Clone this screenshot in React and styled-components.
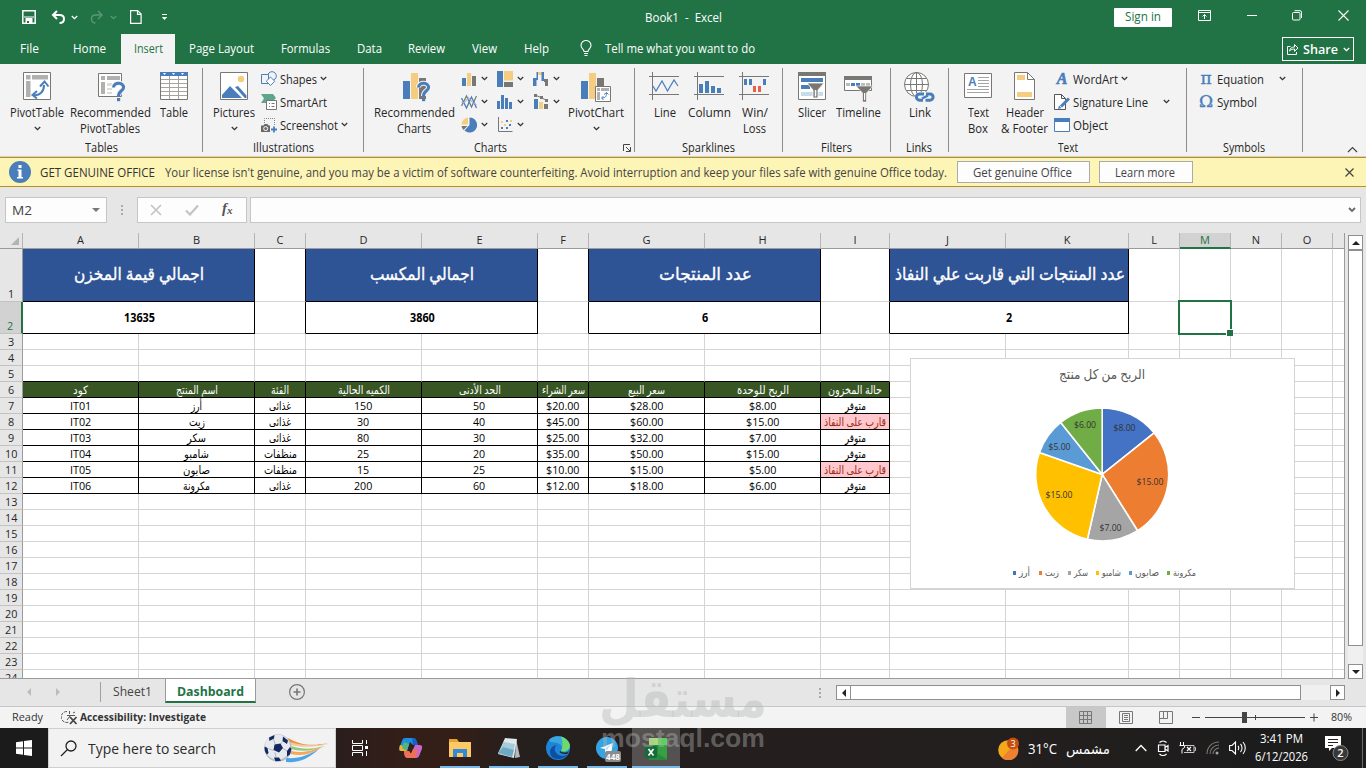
import React, { useLayoutEffect, useRef, useState } from "react";
import styled, { createGlobalStyle } from "styled-components";

const BLUE = "#4a7ebb";
const SAND = "#f5cd80";
const GREY = "#797774";

const GlobalStyle = createGlobalStyle`
  * {
    box-sizing: border-box;
  }
  body {
    margin: 0;
    overflow: hidden;
    font-family: "Open Sans", "Noto Sans", "DejaVu Sans", sans-serif;
    font-size: 12px;
    color: #262626;
  }
`;

// condenses a label horizontally to a fixed width
function Fit({ w, ar, children }) {
  const ref = useRef(null);
  const [fit, setFit] = useState({});
  useLayoutEffect(() => {
    const el = ref.current;
    el.style.transform = "none";
    const natural = el.getBoundingClientRect().width;
    setFit({ transform: `scaleX(${w / natural})` });
  }, [w, children]);
  return (
    <FitBox $w={w}>
      <FitText ref={ref} dir={ar ? "rtl" : "ltr"} style={fit}>
        {children}
      </FitText>
    </FitBox>
  );
}

function Svg({ w, h, children }) {
  return (
    <Drawing width={w} height={h} viewBox={`0 0 ${w} ${h}`} fill="none">
      {children}
    </Drawing>
  );
}

function Chevron({ color = "#333" }) {
  return (
    <Svg w={7} h={5}>
      <path d="M.8 1l2.7 2.6L6.2 1" stroke={color} strokeWidth="1.3" />
    </Svg>
  );
}

/* ---------- ribbon drawings ---------- */

const PivotIcon = () => (
  <Svg w={28} h={28}>
    <path d="M.5.5h27v27H.5z" fill="#fff" stroke="#797774" />
    <path d="M3 3h4.500v4.500H3zM9 3h16v4.500H9zM3 9h4.500v16H3z" fill="#b1b0af" />
    <path d="M10.500 23c6.500 1 10.500-3.500 10.500-10" stroke={BLUE} strokeWidth="2" />
    <path d="M17 14.500l4.500-5 4 5M14 19l-4.500 4 4.500 3.500" stroke={BLUE} strokeWidth="2" />
  </Svg>
);

const Question = ({ x, y }) => (
  <g transform={`translate(${x} ${y})`}>
    <path d="M1.500 5.500C1.500-.5 12.500 0 11.500 6 11 9 6.500 9 6.500 14" stroke="#f3f3f3" strokeWidth="5" />
    <path d="M1.500 5.500C1.500-.5 12.500 0 11.500 6 11 9 6.500 9 6.500 14" stroke={BLUE} strokeWidth="3" />
    <path d="M5 16h3.200v3.200H5z" fill={BLUE} />
  </g>
);

const RecPivotIcon = () => (
  <Svg w={32} h={30}>
    <g transform="translate(4 0)">
      <path d="M.5 1.500h23v23H.5z" fill="#fff" stroke="#797774" />
      <path d="M3 4h4v4H3zM9 4h13v4H9zM3 10h4v12H3z" fill="#b1b0af" />
      <path d="M9 11h5v3H9zM9 16h5v2H9zM9 20h5v2H9z" fill="#ddd" />
      <Question x={14} y={10} />
    </g>
  </Svg>
);

const TableIcon = () => (
  <Svg w={28} h={28}>
    <path d="M.5.5h27v27H.5z" fill="#fff" stroke="#797774" />
    <path d="M0 0h28v4H0z" fill={BLUE} />
    <path d="M3 1h3L4.500 3zM12 1h3l-1.500 2zM21 1h3l-1.500 2z" fill="#fff" />
    <path d="M9.500 4v23M18.500 4v23M1 7.500h26M1 11.500h26M1 15.500h26M1 19.500h26M1 23.500h26" stroke="#a5a4a2" />
  </Svg>
);

const PicturesIcon = () => (
  <Svg w={28} h={28}>
    <path d="M.5.5h27v27H.5z" fill="#fff" stroke="#797774" />
    <circle cx="21" cy="7" r="3.200" fill={SAND} />
    <path d="M2 26v-3l8-9 12 12zM15 15l3-1 8.500 9.500V26h-1.800z" fill={BLUE} />
  </Svg>
);

const ShapesIcon = () => (
  <Svg w={16} h={16}>
    <circle cx="11" cy="5" r="4.300" stroke={BLUE} fill="#f3f3f3" />
    <path d="M.5 3.500h7v9h-7z" stroke={BLUE} fill="#f3f3f3" />
    <path d="M9.500 6l4.200 4.200-4.200 4.300-4.200-4.300z" stroke={BLUE} fill="#fff" />
  </Svg>
);

const SmartArtIcon = () => (
  <Svg w={16} h={16}>
    <path d="M0 0h12l3 4-3 3H5v2H0l3-4.500z" fill="#5fa58b" />
    <path d="M5.500 6.500h10v9h-10z" fill="#fff" stroke="#797774" />
    <path d="M8 9.500h1M10.500 9.500h3M8 12.500h1M10.500 12.500h3" stroke="#797774" />
  </Svg>
);

const ScreenshotIcon = () => (
  <Svg w={16} h={16}>
    <path d="M3.500 6V1.500h10V9" stroke="#888" strokeDasharray="1 1" />
    <path d="M0 8.500h2.500l1-1.500h3l1 1.500H9V15H0z" fill="#6b6967" />
    <circle cx="4.700" cy="11.600" r="2" stroke="#fff" />
    <path d="M13 9.500v6M10 12.500h6" stroke={BLUE} strokeWidth="1.800" />
  </Svg>
);

const RecChartsIcon = () => (
  <Svg w={33} h={30}>
    <g transform="translate(5 0)">
      <path d="M0 9h7v18H0z" fill={BLUE} />
      <path d="M8 1h7v26H8z" fill={SAND} />
      <path d="M16 6h7v21h-7z" fill={GREY} />
      <Question x={14} y={10} />
    </g>
  </Svg>
);

const PivotChartIcon = () => (
  <Svg w={30} h={30}>
    <path d="M0 9h7v18H0z" fill={BLUE} />
    <path d="M8 1h7v26H8z" fill={SAND} />
    <path d="M16 6h7v8h-7z" fill={GREY} />
    <path d="M14.500 14.500h15v15h-15z" fill="#fff" stroke="#797774" />
    <path d="M16 16h3v3h-3zM20 16h8v3h-8zM16 20h3v8h-3z" fill="#b1b0af" />
    <path d="M21 26c3 0 4.500-1 4.500-5M23 22.500l2.500-2 2 2M22.500 24l-2 2 2 2" stroke={BLUE} />
  </Svg>
);

const chartIcons = [
  // column
  <Svg w={16} h={16}>
    <path d="M1 7h4v8H1z" fill={BLUE} />
    <path d="M6 2h4v13H6z" fill={SAND} />
    <path d="M11 5h4v10h-4z" fill={GREY} />
  </Svg>,
  // hierarchy
  <Svg w={16} h={16}>
    <path d="M0 0h6v16H0z" fill={BLUE} />
    <path d="M7 0h9v9.500H7z" fill={SAND} />
    <path d="M7 11h9v5H7z" fill={GREY} />
  </Svg>,
  // waterfall
  <Svg w={16} h={16}>
    <path d="M0 7h3.500v8H0zM3.500 1H5v8H3.500z" fill={BLUE} />
    <path d="M5 1h4v3H5z" fill={SAND} />
    <path d="M8.500 1H11v9H8.500z" fill={BLUE} />
    <path d="M11 8h4v7h-3v-4h-1z" fill={GREY} />
  </Svg>,
  // line
  <Svg w={16} h={16}>
    <path d="M.5 12L5.500 2l5 11 5-11" stroke="#797774" strokeWidth="1.200" />
    <path d="M.5 4l5 10 5-11 5 11" stroke={BLUE} strokeWidth="1.300" />
    <path d="M.5 8.500h3l4-5 4 5 4 2" stroke="#8cb0d8" />
  </Svg>,
  // histogram
  <Svg w={16} h={16}>
    <path d="M0 7h3v8H0zM4 1h3v14H4zM8 4h3v11H8zM12 8h3v7h-3z" fill={BLUE} />
  </Svg>,
  // combo
  <Svg w={16} h={16}>
    <path d="M1 5h4v10H1z" fill={BLUE} />
    <path d="M6 8h4v7H6z" fill={SAND} />
    <path d="M11 10h4v5h-4z" fill={GREY} />
    <path d="M2 1l6 2.500 6 3" stroke="#797774" />
    <path d="M1 0h3v3H1zM7 2h3v3H7zM12 5h3v3h-3z" fill={GREY} />
  </Svg>,
  // pie
  <Svg w={16} h={16}>
    <path d="M8.500 8V.5a7.500 7.500 0 1 1-5 13z" fill={BLUE} />
    <path d="M7 7.500V.5A7 7 0 0 0 .5 7.500z" fill={SAND} />
    <path d="M.5 9H6.500L2.500 13A7 7 0 0 1 .5 9z" fill={GREY} />
  </Svg>,
  // scatter
  <Svg w={16} h={16}>
    <path d="M1.500 0v14.500h14" stroke="#797774" />
    <path d="M4 10h2v2H4zM9 3h2v2H9zM12 7h2v2h-2zM9 10h2v2H9z" fill={BLUE} />
    <path d="M4 4h2v2H4zM7 7h2v2H7zM13 3h2v2h-2z" fill={SAND} />
  </Svg>,
];

const sparkFrame = <path d="M3.500 0v28M0 4.500h30M0 22.500h30" stroke="#797774" />;

const LineSparkIcon = () => (
  <Svg w={31} h={28}>
    {sparkFrame}
    <path d="M4 14l3 5 6-10 5.500 10 6.500-11 4 6" stroke={BLUE} strokeWidth="1.200" />
  </Svg>
);

const ColumnSparkIcon = () => (
  <Svg w={31} h={28}>
    {sparkFrame}
    <path d="M5 12h4v9H5zM11 9h4v12h-4zM17 14h4v7h-4zM23 16h4v5h-4z" fill={BLUE} />
  </Svg>
);

const WinLossIcon = () => (
  <Svg w={31} h={28}>
    {sparkFrame}
    <path d="M5 7h3v6H5zM10 7h3v6h-3zM24 7h3v6h-3z" fill={BLUE} />
    <path d="M14 14h3v6h-3zM19 14h3v6h-3z" fill="#e8604c" />
  </Svg>
);

const SlicerIcon = () => (
  <Svg w={28} h={28}>
    <path d="M.5.5h27v27H.5z" fill="#fff" stroke="#797774" />
    <path d="M0 0h28v4H0z" fill={GREY} />
    <path d="M3 6h22v4H3zM3 13h9v4H3z" fill={BLUE} />
    <path d="M3 20h22v4H3z" fill="#c5dcea" />
    <path d="M9 11h17l-6 7v8h-5v-8z" fill={GREY} stroke="#fff" strokeWidth=".8" />
    <path d="M16.800 18h1.500v6.500h-1.500z" fill="#fff" />
  </Svg>
);

const TimelineIcon = () => (
  <Svg w={29} h={30}>
    <path d="M.5 4.500h27v14H.5z" fill="#fff" stroke="#797774" />
    <path d="M0 4h28v4H0z" fill={GREY} />
    <path d="M2 11h4v3H2zM17 11h4v3h-4zM22 11h4v3h-4z" fill="#bbb" />
    <path d="M7 11h4v3H7zM12 11h4v3h-4z" fill={BLUE} />
    <path d="M12 14h17l-6.500 7v9h-4v-9z" fill={GREY} stroke="#f3f3f3" strokeWidth=".7" />
    <path d="M20 21h1.200v7H20z" fill="#fff" />
  </Svg>
);

const LinkIcon = () => (
  <Svg w={31} h={30}>
    <circle cx="12.500" cy="12.500" r="12" stroke="#797774" fill="#fff" />
    <ellipse cx="12.500" cy="12.500" rx="6" ry="12" stroke="#797774" />
    <path d="M12.500 0v25M.5 12.500h24M2.500 6.500h20M2.500 18.500h20" stroke="#797774" />
    <path d="M15.500 25h11" stroke="#f3f3f3" strokeWidth="10" strokeLinecap="round" />
    <path d="M20 22h-4.500a3 3 0 0 0 0 6.200H19M22 22h4a3 3 0 0 1 0 6.200h-4.500" stroke={BLUE} strokeWidth="3" />
    <path d="M18 26.500l6-3" stroke={BLUE} strokeWidth="2.400" />
  </Svg>
);

const TextBoxIcon = () => (
  <Svg w={28} h={28}>
    <path d="M.5 1.500h27v24H.5z" fill="#fff" stroke="#797774" />
    <text x="4" y="14" fontSize="12" fontWeight="700" fontFamily="Liberation Sans" fill={BLUE}>A</text>
    <path d="M14 5.500h11M14 8.500h11M14 11.500h11M14 14.500h11M3 17.500h22M3 20.500h22" stroke="#a5a4a2" />
  </Svg>
);

const HeaderFooterIcon = () => (
  <Svg w={21} h={28}>
    <path d="M.5.5h13l7 7v20H.5z" fill="#fff" stroke="#797774" />
    <path d="M13.500.5v7h7" stroke="#797774" />
    <path d="M3 3h8v5H3zM3 20h15v5H3z" fill={SAND} />
  </Svg>
);

const SignatureIcon = () => (
  <Svg w={16} h={16}>
    <path d="M.5.5h7l4 4v11H.5z" fill="#fff" stroke="#555" />
    <path d="M7.500.5v4h4" stroke="#555" />
    <path d="M15 4.500L7 12.500" stroke={BLUE} strokeWidth="3" />
    <path d="M4 15l1-3.500L7.500 14z" fill={BLUE} />
  </Svg>
);

const ObjectIcon = () => (
  <Svg w={16} h={14}>
    <path d="M.5.5h15v13H.5z" fill="#fff" stroke={BLUE} />
    <path d="M0 0h16v4H0z" fill={BLUE} />
  </Svg>
);

function Big({ icon, lines, w, arrow }) {
  return (
    <BigButton $w={w}>
      <BigArt>{icon}</BigArt>
      {lines.map(([text, tw]) => (
        <BigLine key={text}>
          <Fit w={tw}>{text}</Fit>
        </BigLine>
      ))}
      {arrow && (
        <BigArrow>
          <Chevron />
        </BigArrow>
      )}
    </BigButton>
  );
}

function Small({ icon, text, tw, arrow, gap = 3 }) {
  return (
    <SmallButton>
      <SmallArt>{icon}</SmallArt>
      <Fit w={tw}>{text}</Fit>
      {arrow && (
        <SmallArrow $gap={gap}>
          <Chevron />
        </SmallArrow>
      )}
    </SmallButton>
  );
}

function Ribbon() {
  return (
    <RibbonBar>
      <Group $w={203}>
        <Tools $pad={5}>
          <Big w={64} icon={<PivotIcon />} lines={[["PivotTable", 54]]} arrow />
          <Big w={82} icon={<RecPivotIcon />} lines={[["Recommended", 81], ["PivotTables", 60]]} />
          <Big w={46} icon={<TableIcon />} lines={[["Table", 28]]} />
        </Tools>
        <GroupName><Fit w={33}>Tables</Fit></GroupName>
      </Group>
      <Group $w={161}>
        <Tools $pad={9}>
          <Big w={44} icon={<PicturesIcon />} lines={[["Pictures", 42]]} arrow />
          <SmallColumn $ml={5}>
            <Small icon={<ShapesIcon />} text="Shapes" tw={37} arrow />
            <Small icon={<SmartArtIcon />} text="SmartArt" tw={47} />
            <Small icon={<ScreenshotIcon />} text="Screenshot" tw={58} arrow />
          </SmallColumn>
        </Tools>
        <GroupName><Fit w={61}>Illustrations</Fit></GroupName>
      </Group>
      <Group $w={271}>
        <Tools $pad={9}>
          <Big w={82} icon={<RecChartsIcon />} lines={[["Recommended", 81], ["Charts", 34]]} />
          <ChartGrid>
            {chartIcons.map((icon, i) => (
              <ChartButton key={i}>
                {icon}
                <Chevron />
              </ChartButton>
            ))}
          </ChartGrid>
          <Big w={54} icon={<PivotChartIcon />} lines={[["PivotChart", 56]]} arrow />
        </Tools>
        <GroupName $right={17}><Fit w={33}>Charts</Fit></GroupName>
        <Launcher>
          <Svg w={8} h={8}>
            <path d="M.5 7V.5H7M3 3l4 4M7.500 3v4.500H3" stroke="#444" />
          </Svg>
        </Launcher>
      </Group>
      <Group $w={148}>
        <Tools $pad={7}>
          <Big w={45} icon={<LineSparkIcon />} lines={[["Line", 22]]} />
          <Big w={45} icon={<ColumnSparkIcon />} lines={[["Column", 43]]} />
          <Big w={45} icon={<WinLossIcon />} lines={[["Win/", 26], ["Loss", 23]]} />
        </Tools>
        <GroupName><Fit w={53}>Sparklines</Fit></GroupName>
      </Group>
      <Group $w={108}>
        <Tools $pad={7}>
          <Big w={43} icon={<SlicerIcon />} lines={[["Slicer", 28]]} />
          <Big w={50} icon={<TimelineIcon />} lines={[["Timeline", 45]]} />
        </Tools>
        <GroupName><Fit w={31}>Filters</Fit></GroupName>
      </Group>
      <Group $w={58}>
        <Tools $pad={6}>
          <Big w={45} icon={<LinkIcon />} lines={[["Link", 22]]} />
        </Tools>
        <GroupName $right={1}><Fit w={26}>Links</Fit></GroupName>
      </Group>
      <Group $w={238}>
        <Tools $pad={11}>
          <Big w={36} icon={<TextBoxIcon />} lines={[["Text", 21], ["Box", 20]]} />
          <Big w={57} icon={<HeaderFooterIcon />} lines={[["Header", 38], ["& Footer", 47]]} />
          <SmallColumn $ml={1}>
            <Small icon={<GlyphA>A</GlyphA>} text="WordArt" tw={45} arrow />
            <Small icon={<SignatureIcon />} text="Signature Line" tw={75} arrow gap={15} />
            <Small icon={<ObjectIcon />} text="Object" tw={35} />
          </SmallColumn>
        </Tools>
        <GroupName><Fit w={20}>Text</Fit></GroupName>
      </Group>
      <Group $w={116}>
        <Tools $pad={11}>
          <SmallColumn $ml={0}>
            <Small icon={<Greek>π</Greek>} text="Equation" tw={47} arrow gap={15} />
            <Small icon={<Greek>Ω</Greek>} text="Symbol" tw={40} />
          </SmallColumn>
        </Tools>
        <GroupName $right={1}><Fit w={42}>Symbols</Fit></GroupName>
      </Group>
      <Collapse>
        <Svg w={11} h={7}>
          <path d="M1 6l4.500-4.500L10 6" stroke="#444" strokeWidth="1.200" />
        </Svg>
      </Collapse>
    </RibbonBar>
  );
}

/* ---------- title and tabs ---------- */

const TABS = [
  ["File", 59, 19],
  ["Home", 61, 33],
  ["Insert", 54, 29],
  ["Page Layout", 93, 65],
  ["Formulas", 75, 49],
  ["Data", 52, 25],
  ["Review", 63, 37],
  ["View", 53, 25],
  ["Help", 51, 25],
];

function TitleBar() {
  return (
    <Title>
      <QuickAccess>
        <Svg w={14} h={14}>
          <path d="M.8.800h12.400v12.400H.8z" stroke="#fff" strokeWidth="1.500" />
          <path d="M2 7h10M3.500 8.500h7" stroke="#fff" />
          <path d="M3.500 9h7v5h-7z" fill="#fff" />
          <path d="M5 11h2v2H5z" fill="#217346" />
        </Svg>
        <Svg w={14} h={14}>
          <path d="M2 5h6.500c3 0 4.500 1.500 4.500 4s-2 4-4.500 4M6 1L2 5l4 4" stroke="#fff" strokeWidth="2" />
        </Svg>
        <Chevron color="#fff" />
        <Svg w={14} h={14}>
          <path d="M12 5H5.500C3 5 1.500 6.500 1.500 9s2 4 4 4M8 1l4 4-4 4" stroke="#5a967a" strokeWidth="1.500" />
        </Svg>
        <Chevron color="#5a967a" />
        <Svg w={12} h={14}>
          <path d="M.6.600h7l3.500 3.500v9.300H.6zM7.500.600v3.800h3.500" stroke="#fff" strokeWidth="1.200" />
        </Svg>
        <Svg w={7} h={7}>
          <path d="M1 .5h5" stroke="#fff" />
          <path d="M.8 3h5.400L3.500 6z" fill="#fff" />
        </Svg>
      </QuickAccess>
      <BookName><Fit w={77}>Book1  -  Excel</Fit></BookName>
      <SignIn><Fit w={36}>Sign in</Fit></SignIn>
      <WindowButtons>
        <Svg w={13} h={11}>
          <path d="M.5.500h12v10H.5zM.5 2.500h12M6.500 9V4.500M4.500 6.500l2-2 2 2" stroke="#fff" />
        </Svg>
        <Svg w={10} h={11}>
          <path d="M0 5.500h10" stroke="#fff" />
        </Svg>
        <Svg w={10} h={11}>
          <rect x=".5" y="2.500" width="7.500" height="7.500" rx="1" stroke="#fff" />
          <path d="M2.500.700H8a1.500 1.500 0 0 1 1.500 1.500V8" stroke="#fff" />
        </Svg>
        <Svg w={11} h={11}>
          <path d="M.5.500l10 10M10.500.500l-10 10" stroke="#fff" strokeWidth="1.100" />
        </Svg>
      </WindowButtons>
    </Title>
  );
}

function TabBar() {
  return (
    <Tabs>
      {TABS.map(([name, w, tw]) => (
        <Tab key={name} $w={w} $active={name === "Insert"}>
          <Fit w={tw}>{name}</Fit>
        </Tab>
      ))}
      <TellMe>
        <Svg w={12} h={16}>
          <path d="M4 11.500C4 9 1 8.500 1 5.500a5 5 0 0 1 10 0c0 3-3 3.500-3 6zM4 13.500h4M4.500 15.500h3" stroke="#fff" strokeWidth="1.100" />
        </Svg>
        <Fit w={150}>Tell me what you want to do</Fit>
      </TellMe>
      <Share>
        <Svg w={12} h={12}>
          <path d="M3.500 3.500H.5v8h9V9M2.500 8c.5-3 2.500-4 5-4V1.500L11 5 7.500 8.300V6C5.500 6 4 6.500 2.500 8z" stroke="#fff" />
        </Svg>
        <Fit w={35}>Share</Fit>
        <Chevron color="#fff" />
      </Share>
    </Tabs>
  );
}

function LicenseBar() {
  return (
    <License>
      <Svg w={22} h={22}>
        <circle cx="11" cy="11" r="11" fill={BLUE} />
        <path d="M9.500 4h3v3h-3zM8.500 8.500h4V16h1.500v1.500H8V16h1.500v-6h-1z" fill="#fff" />
      </Svg>
      <LicenseTitle><Fit w={115}>GET GENUINE OFFICE</Fit></LicenseTitle>
      <Fit w={782}>
        Your license isn't genuine, and you may be a victim of software counterfeiting. Avoid interruption and keep your files safe with genuine Office today.
      </Fit>
      <LicenseButton $w={133} $ml={10}><Fit w={99}>Get genuine Office</Fit></LicenseButton>
      <LicenseButton $w={94} $ml={9}><Fit w={60}>Learn more</Fit></LicenseButton>
      <LicenseClose>
        <Svg w={9} h={9}>
          <path d="M.5.500l8 8M8.500.500l-8 8" stroke="#444" strokeWidth="1.200" />
        </Svg>
      </LicenseClose>
    </License>
  );
}

function FormulaBar() {
  return (
    <FormulaRow>
      <NameBox>
        <Fit w={20}>M2</Fit>
        <Svg w={8} h={4}>
          <path d="M0 0h8L4 4z" fill="#777" />
        </Svg>
      </NameBox>
      <Dots>
        <Svg w={2} h={10}>
          <path d="M0 0h2v2H0zM0 4h2v2H0zM0 8h2v2H0z" fill="#a9a9a9" />
        </Svg>
      </Dots>
      <FxBox>
        <Svg w={12} h={12}>
          <path d="M1 1l10 10M11 1L1 11" stroke="#c4c4c4" strokeWidth="1.700" />
        </Svg>
        <Svg w={14} h={12}>
          <path d="M1 6.500l4 4L13 1.500" stroke="#c4c4c4" strokeWidth="2.200" />
        </Svg>
        <Fx>f<sub>x</sub></Fx>
      </FxBox>
      <FormulaInput>
        <Svg w={8} h={6}>
          <path d="M1 1l3 3 3-3" stroke="#666" strokeWidth="1.800" />
        </Svg>
      </FormulaInput>
    </FormulaRow>
  );
}

/* ---------- sheet ---------- */

const COLS = "ABCDEFGHIJKLMNO".split("");
const KPIS = [
  { col: 2, title: "اجمالي قيمة المخزن", w: 130, value: "13635" },
  { col: 5, title: "اجمالي المكسب", w: 104, value: "3860" },
  { col: 8, title: "عدد المنتجات", w: 93, value: "6" },
  { col: 11, title: "عدد المنتجات التي قاربت علي النفاذ", w: 230, value: "2" },
];
const HEADS = [
  ["كود", 15],
  ["اسم المنتج", 42],
  ["الفئة", 18],
  ["الكميه الحالية", 52],
  ["الحد الأدنى", 42],
  ["سعر الشراء", 43],
  ["سعر البيع", 37],
  ["الربح للوحدة", 52],
  ["حالة المخزون", 54],
];
const FOOD = ["غذائى", 22];
const CLEAN = ["منظفات", 33];
const OK = ["متوفر", 21];
const LOW = ["قارب على النفاذ", 62];
const ITEMS = [
  ["IT01", ["أرز", 11], FOOD, "150", "50", "$20.00", "$28.00", "$8.00", OK],
  ["IT02", ["زيت", 16], FOOD, "30", "40", "$45.00", "$60.00", "$15.00", LOW],
  ["IT03", ["سكر", 19], FOOD, "80", "30", "$25.00", "$32.00", "$7.00", OK],
  ["IT04", ["شامبو", 25], CLEAN, "25", "20", "$35.00", "$50.00", "$15.00", OK],
  ["IT05", ["صابون", 27], CLEAN, "15", "25", "$10.00", "$15.00", "$5.00", LOW],
  ["IT06", ["مكرونة", 27], FOOD, "200", "60", "$12.00", "$18.00", "$6.00", OK],
];

const latinWidth = (s) =>
  [...s].reduce((sum, ch) => sum + (ch === "." || ch === "I" ? 3 : 6.1), 0);

function renderCell(row, col) {
  const key = `${row}-${col}`;
  const kpi = row < 3 && KPIS.find((k) => k.col === col);
  if (kpi) {
    return row === 1 ? (
      <KpiTitle key={key} $col={col}>
        <Fit w={kpi.w} ar>{kpi.title}</Fit>
      </KpiTitle>
    ) : (
      <KpiValue key={key} $col={col}>
        <Fit w={kpi.value.length * 6.2}>{kpi.value}</Fit>
      </KpiValue>
    );
  }
  if (row < 3 && KPIS.some((k) => k.col + 1 === col)) return null;
  if (row === 6 && col < 11) {
    const [text, w] = HEADS[col - 2];
    return (
      <HeadCell key={key} $row={row} $col={col}>
        <Fit w={w} ar>{text}</Fit>
      </HeadCell>
    );
  }
  if (row > 6 && row < 13 && col < 11) {
    const value = ITEMS[row - 7][col - 2];
    const arabic = Array.isArray(value);
    return (
      <ItemCell key={key} $row={row} $col={col} $low={value === LOW}>
        {arabic ? <Fit w={value[1]} ar>{value[0]}</Fit> : <Fit w={latinWidth(value)}>{value}</Fit>}
      </ItemCell>
    );
  }
  return (
    <Cell
      key={key}
      $row={row}
      $col={col}
      $darkRight={row < 3 && [4, 7, 10].includes(col)}
      $darkBottom={row === 5 && col < 11}
    />
  );
}

function Sheet() {
  const rows = Array.from({ length: 24 }, (_, i) => i + 1);
  return (
    <SheetGrid>
      <Corner>
        <Svg w={8} h={8}>
          <path d="M8 0v8H0z" fill="#b4b4b4" />
        </Svg>
      </Corner>
      {COLS.map((c) => (
        <ColHead key={c} $active={c === "M"}>{c}</ColHead>
      ))}
      <ColHead $last />
      {rows.map((row) => (
        <React.Fragment key={row}>
          <RowHead $row={row} $active={row === 2}>
            <Fit w={row > 9 ? 12.4 : 6.2}>{String(row)}</Fit>
          </RowHead>
          {Array.from({ length: 16 }, (_, i) => renderCell(row, i + 2))}
        </React.Fragment>
      ))}
      <Selection />
      <ProfitChart />
    </SheetGrid>
  );
}

const SLICES = [
  { name: "أرز", value: 8, color: "#4472c4", x: 213.500, y: 72, lw: 11, gap: 9 },
  { name: "زيت", value: 15, color: "#ed7d31", x: 239, y: 126, lw: 14, gap: 9 },
  { name: "سكر", value: 7, color: "#a5a5a5", x: 199.500, y: 172, lw: 14, gap: 8 },
  { name: "شامبو", value: 15, color: "#ffc000", x: 148, y: 139, lw: 19, gap: 8 },
  { name: "صابون", value: 5, color: "#5b9bd5", x: 148.500, y: 91, lw: 24, gap: 8 },
  { name: "مكرونة", value: 6, color: "#70ad47", x: 174, y: 69, lw: 23, gap: 0 },
];

function ProfitChart() {
  const total = SLICES.reduce((sum, s) => sum + s.value, 0);
  const cx = 191.200;
  const cy = 115.400;
  const r = 66.500;
  const point = (v) => {
    const a = (v / total) * Math.PI * 2;
    return `${cx + r * Math.sin(a)} ${cy - r * Math.cos(a)}`;
  };
  let start = 0;
  return (
    <ChartCard>
      <ChartTitle><Fit w={86} ar>الربح من كل منتج</Fit></ChartTitle>
      <svg width="383" height="229" viewBox="0 0 383 229">
        {SLICES.map((s) => {
          const from = start;
          start += s.value;
          return (
            <path
              key={s.name}
              d={`M${cx} ${cy}L${point(from)}A${r} ${r} 0 0 1 ${point(start)}z`}
              fill={s.color}
              stroke="#fff"
              strokeWidth="1.600"
            />
          );
        })}
        {SLICES.map((s) => (
          <text
            key={s.name}
            x={s.x}
            y={s.y}
            fontSize="9.300"
            fontWeight="500"
            fill="#333"
            textAnchor="middle"
            lengthAdjust="spacingAndGlyphs"
            textLength={s.value > 9 ? 27 : 22}
          >
            {`$${s.value}.00`}
          </text>
        ))}
      </svg>
      <Legend>
        {SLICES.map((s) => (
          <LegendItem key={s.name} $gap={s.gap}>
            <Swatch $color={s.color} />
            <Fit w={s.lw} ar>{s.name}</Fit>
          </LegendItem>
        ))}
      </Legend>
    </ChartCard>
  );
}

function Workspace() {
  return (
    <Work>
      <Sheet />
      <VScroll>
        <ScrollButton>
          <Svg w={8} h={4}><path d="M0 4h8L4 0z" fill="#222" /></Svg>
        </ScrollButton>
        <VThumb />
        <VRest />
        <ScrollButton>
          <Svg w={8} h={4}><path d="M0 0h8L4 4z" fill="#222" /></Svg>
        </ScrollButton>
      </VScroll>
    </Work>
  );
}

function SheetTabs() {
  return (
    <SheetBar>
      <TabArrows>
        <Svg w={4} h={8}><path d="M4 0v8L0 4z" fill="#bcbcbc" /></Svg>
        <Svg w={4} h={8}><path d="M0 0v8l4-4z" fill="#bcbcbc" /></Svg>
      </TabArrows>
      <SheetTab $w={64}><Fit w={39}>Sheet1</Fit></SheetTab>
      <SheetTab $w={91} $active><Fit w={67}>Dashboard</Fit></SheetTab>
      <AddSheet>
        <Svg w={16} h={16}>
          <circle cx="8" cy="8" r="7.400" stroke="#777" strokeWidth="1.200" />
          <path d="M8 4.500v7M4.500 8h7" stroke="#777" strokeWidth="1.600" />
        </Svg>
      </AddSheet>
      <HScroll>
        <Svg w={2} h={10}>
          <path d="M0 0h2v2H0zM0 4h2v2H0zM0 8h2v2H0z" fill="#a9a9a9" />
        </Svg>
        <HTrack>
          <ScrollButton>
            <Svg w={4} h={8}><path d="M4 0v8L0 4z" fill="#222" /></Svg>
          </ScrollButton>
          <HThumb />
          <HRest />
          <ScrollButton>
            <Svg w={4} h={8}><path d="M0 0v8l4-4z" fill="#222" /></Svg>
          </ScrollButton>
        </HTrack>
      </HScroll>
    </SheetBar>
  );
}

function StatusBar() {
  return (
    <Status>
      <Fit w={31}>Ready</Fit>
      <Accessibility>
        <Svg w={17} h={15}>
          <path d="M6 1.500a5.500 5.500 0 1 0 2 10.500" stroke="#555" strokeDasharray="3 1" />
          <path d="M6 5.500h8M9 6l-3 4M8.500 1v3M12 3l2-1" stroke="#555" />
          <path d="M9 7l6.500 7M15.500 7L9 14" stroke="#444" strokeWidth="1.800" />
        </Svg>
        <Fit w={126}>Accessibility: Investigate</Fit>
      </Accessibility>
      <Views>
        <View $active>
          <Svg w={13} h={13}>
            <path d="M.5.500h12v12H.5zM4.500.500v12M8.500.500v12M.5 4.500h12M.5 8.500h12" stroke="#777" />
          </Svg>
        </View>
        <View>
          <Svg w={14} h={13}>
            <path d="M.5.500h13v12H.5zM3.500 2.500h7v8h-7zM5 4.500h4M5 6.500h4M5 8.500h4" stroke="#777" />
          </Svg>
        </View>
        <View>
          <Svg w={14} h={13}>
            <path d="M.5.500h13v12H.5zM.5 7.500h8v-7M4.500.500v7" stroke="#777" />
          </Svg>
        </View>
      </Views>
      <Zoom>
        <Svg w={126} h={13}>
          <path d="M0 6.500h8M13 6.500h100M118 6.500h8M122 2.500v8" stroke="#444" />
          <path d="M50 1h5v11h-5z" fill="#444" />
          <path d="M63.500 4v5" stroke="#444" />
        </Svg>
        <Fit w={21}>80%</Fit>
      </Zoom>
    </Status>
  );
}

/* ---------- windows taskbar ---------- */

const Ball = () => (
  <Svg w={66} h={30}>
    <path d="M24 5c14 8 24 8 41 5-14 4-28 4-40 0z" fill="#ee8d3a" />
    <path d="M26 9c14 4 24 4 39 2-13 3-26 4-38 1z" fill="#f6c79a" />
    <path d="M27 13c13 4 22 3 34 0-12 5-23 6-34 3z" fill="#8fc97c" />
    <path d="M27 18c12 3 22-1 31-4-9 6-19 10-31 7z" fill="#f5a75a" />
    <path d="M22 25c14 1 22-3 33-9-10 9-19 14-33 13z" fill="#4da3e8" />
    <circle cx="14" cy="15" r="13.700" fill="#b9bfca" />
    <circle cx="13.500" cy="14" r="12.600" fill="#e6e9ee" />
    <path d="M10.500 11.500l6-1 2.500 4.500-4 4.500-5.500-2.500zM5 4.500l5.500-2.500-.5 3.500-4.500 2.500zM19 3.500l5 4-1 3.500-4.500-3zM.8 13.500l2.700 1.500 1 5-1.500 1.500C1 19.500 0 16 .8 13.500zM26 14l1.500 2-1.500 5.500-3 2V18zM10 24.500l5 0 2 3.300-5.500.4z" fill="#14275f" />
    <path d="M9.500 6l1.500 5M18.500 8.500l-2 2.500M4.500 15.500l5 2M19 15.500l4 2.500M12 24.500l-1-5" stroke="#9aa0b0" strokeWidth=".7" />
  </Svg>
);

const CopilotIcon = () => (
  <Svg w={24} h={22}>
    <path d="M6 1h8c2 0 3 1 3.500 3L19 8h-5L11 5 8 14H2C-.5 14 0 11 1 9l2-5c.5-2 1.500-3 3-3z" fill="#1d8fe0" />
    <path d="M8 14H2C0 14 0 11 1 8l7 2z" fill="#f2b02c" />
    <path d="M5 5l5 2-2 7-5-3z" fill="#52b77c" />
    <path d="M16 8h5c2.500 0 2.500 3 1.500 5l-2 5c-.6 2-1.500 3-3.500 3H9c-2 0-3-1-3.500-3L5 14h5l2 3z" fill="#c768c8" />
    <path d="M5 14h5l2 3 2-5 5 2-3 7H9c-2 0-3-1-3.500-3z" fill="#ee7154" />
    <path d="M13 1c3 0 4 1 4.500 3L19 8h-5z" fill="#1b5fc4" />
  </Svg>
);

const FolderIcon = () => (
  <Svg w={22} h={20}>
    <path d="M0 1h8l2 3h12v15H0z" fill="#e4a32c" />
    <path d="M0 4h22v15H0z" fill="#ffc866" />
    <path d="M4 19v-8h14v8h-4v-4H8v4z" fill="#2f8ad8" />
  </Svg>
);

const NotepadIcon = () => (
  <Svg w={22} h={22}>
    <path d="M18 2l4 18-5 1z" fill="#b5b9bb" />
    <path d="M7 1l12 1-3 19-16-4z" fill="#dfe9ec" />
    <path d="M6 5l11 2-3 13-14-4z" fill="#a5ccd9" />
    <path d="M5 10l11 3-2 7-14-4z" fill="#6fa9c4" />
  </Svg>
);

const EdgeIcon = () => (
  <Svg w={24} h={24}>
    <circle cx="12" cy="12" r="12" fill="#1d84d8" />
    <path d="M3 4C8-2 22-1 24 10c0 5-6 7-9 5 2-3 1-7-4-8-3-.5-6 0-8-3z" fill="#3aa6dd" />
    <path d="M15 .5c5 2 9 5 9 10-1 4-6 6-9 4.500 2-4 2-10 0-14.500z" fill="#6ddb6a" />
    <path d="M11 9c-4 2-3 10 5 11 2 0 4-.5 6-2-6 8-18 6-18-2 0-4 4-7 7-7z" fill="#0d4f9e" />
    <path d="M14 15c3 2 7 2 9.500 0L21 18c-5 0-8-1-7-3z" fill="#25211f" />
  </Svg>
);

const TelegramIcon = () => (
  <Svg w={22} h={22}>
    <circle cx="11" cy="11" r="11" fill="#34a4e4" />
    <path d="M4 11l13-5-2 11-4-3-2 2v-4z" fill="#fff" />
    <path d="M9 12l6-5-4 6z" fill="#b8dcf3" />
  </Svg>
);

const ExcelIcon = () => (
  <Svg w={23} h={23}>
    <path d="M4 1h18v22H4z" fill="#2a8a3c" />
    <path d="M4 1h9v7H4z" fill="#a8dc7a" />
    <path d="M13 1h9v7h-9z" fill="#5ccf5a" />
    <path d="M13 8h9v14l-9-5z" fill="#36a043" />
    <rect x="0" y="9" width="12" height="12" rx="2" fill="#156b3c" />
    <path d="M3.500 12l5 6.500M8.500 12l-5 6.500" stroke="#fff" strokeWidth="1.600" />
  </Svg>
);

function Taskbar() {
  return (
    <Task>
      <Start>
        <Svg w={16} h={16}>
          <path d="M0 2.300L7 1.300v6.200H0zM8 1.100L16 0v7.500H8zM0 8.500h7v6.200l-7-1zM8 8.500h8V16l-8-1.100z" fill="#fff" />
        </Svg>
      </Start>
      <Search>
        <Svg w={17} h={17}>
          <circle cx="11" cy="6" r="5" stroke="#222" strokeWidth="1.300" />
          <path d="M7.500 9.500L1 16" stroke="#222" strokeWidth="1.300" />
        </Svg>
        <SearchText><Fit w={128}>Type here to search</Fit></SearchText>
        <Ball />
      </Search>
      <TaskView>
        <Svg w={16} h={16}>
          <path d="M.5 0v3.500h10V0M.5 16v-3.500h10V16M.5 5.500h10v5H.5zM14.500 0v4M14.500 11v5" stroke="#fff" />
          <path d="M13 6h3v3h-3z" fill="#fff" />
        </Svg>
      </TaskView>
      <Apps>
        <AppSlot><CopilotIcon /></AppSlot>
        <AppSlot $running><FolderIcon /></AppSlot>
        <AppSlot $running><NotepadIcon /></AppSlot>
        <AppSlot $running><EdgeIcon /></AppSlot>
        <AppSlot $running>
          <TelegramIcon />
          <Unread><Fit w={14}>448</Fit></Unread>
        </AppSlot>
        <AppSlot $running $active><ExcelIcon /></AppSlot>
      </Apps>
      <Tray>
        <Svg w={22} h={23}>
          <circle cx="10" cy="13" r="9.800" fill="#f6a81c" />
          <path d="M17 6a9.800 9.800 0 0 1-13 15z" fill="#ee8131" />
          <circle cx="15" cy="6.500" r="6" fill="#c5500c" />
          <text x="15" y="10" fontSize="9" fill="#fff" textAnchor="middle">3</text>
        </Svg>
        <Temp><Fit w={29}>31°C</Fit></Temp>
        <Weather><Fit w={44} ar>مشمس</Fit></Weather>
        <TrayIcons>
          <Svg w={12} h={8}><path d="M.7 7l5.300-5.500L11.300 7" stroke="#fff" strokeWidth="1.300" /></Svg>
          <Svg w={12} h={16}>
            <path d="M1.500 5h6.500v6.500H1.500zM8 7.500l3-2v5.500l-3-2M2.500 2.500c2-2 5-2 7 0M2.500 14c2 2 5 2 7 0" stroke="#fff" strokeWidth="1.200" />
          </Svg>
          <Svg w={17} h={13}>
            <path d="M6 3.500h9v7H5M15.500 5.500h1v3h-1" stroke="#c8c8c8" />
            <path d="M1.500 0v3M4.500 0v3M.5 3.500h5v2L3 7.500v4" stroke="#fff" />
            <path d="M8 5l4 4M12 5l-4 4" stroke="#fff" strokeWidth="1.200" />
          </Svg>
          <Svg w={13} h={14}>
            <path d="M1 13C1 6 6 1 13 1M4 13c0-5 4-9 9-9M7 13c0-3 3-6 6-6" stroke="#7d7a79" strokeWidth="1.100" />
            <circle cx="11" cy="12" r="1.500" fill="#a5a3a2" />
          </Svg>
          <Svg w={17} h={14}>
            <path d="M.6 4.500H3L6.500 1v12L3 9.500H.6zM9 5c1 1 1 3 0 4M11.500 3c2 2 2 6 0 8M14 1c3 3.500 3 8.500 0 12" stroke="#fff" strokeWidth="1.100" />
          </Svg>
        </TrayIcons>
        <Clock>
          <Fit w={43}>3:41 PM</Fit>
          <Fit w={53}>6/12/2026</Fit>
        </Clock>
        <Svg w={26} h={26}>
          <path d="M0 1h16v12H7l-3 3v-3H0z" fill="#fff" />
          <path d="M3 4.500h10M3 7.500h10M3 10.500h5" stroke="#222" />
          <circle cx="15.500" cy="18" r="7.500" fill="#3a3837" stroke="#8a8887" />
          <text x="15.500" y="22" fontSize="11" fontWeight="600" fill="#fff" textAnchor="middle">2</text>
        </Svg>
        <ShowDesktop />
      </Tray>
    </Task>
  );
}

export default function App() {
  return (
    <Window>
      <GlobalStyle />
      <TitleBar />
      <TabBar />
      <Ribbon />
      <LicenseBar />
      <FormulaBar />
      <Workspace />
      <SheetTabs />
      <StatusBar />
      <Taskbar />
      <Watermark>
        <WatermarkArabic><Fit w={168} ar>مستقل</Fit></WatermarkArabic>
        <WatermarkLatin><Fit w={164}>mostaql.com</Fit></WatermarkLatin>
      </Watermark>
    </Window>
  );
}

/* ---------- styles ---------- */

const FitBox = styled.span`
  display: inline-block;
  flex: none;
  width: ${(p) => p.$w}px;
  white-space: nowrap;
  text-align: left;
`;
const FitText = styled.span`
  display: inline-block;
  white-space: pre;
  transform-origin: 0 50%;
`;
const Drawing = styled.svg`
  display: block;
  flex: none;
`;

const Window = styled.div`
  position: relative;
  display: flex;
  flex-direction: column;
  width: 1366px;
  height: 768px;
  overflow: hidden;
  background: #e6e6e6;
`;

const Title = styled.div`
  display: flex;
  align-items: center;
  height: 34px;
  background: #217346;
  color: #fff;
`;
const QuickAccess = styled.div`
  display: flex;
  align-items: center;
  width: 645px;
  padding-left: 22px;

  > svg:nth-child(2) {
    margin-left: 15px;
  }
  > svg:nth-child(3),
  > svg:nth-child(5) {
    margin-left: 6px;
  }
  > svg:nth-child(4) {
    margin-left: 12px;
  }
  > svg:nth-child(6) {
    margin-left: 13px;
  }
  > svg:nth-child(7) {
    margin-left: 19px;
  }
`;
const BookName = styled.div`
  flex: 1;
`;
const SignIn = styled.div`
  display: flex;
  align-items: center;
  justify-content: center;
  width: 58px;
  height: 19px;
  margin-right: 26px;
  padding-bottom: 1px;
  border-radius: 1px;
  background: #fff;
  color: #217346;
`;
const WindowButtons = styled.div`
  display: flex;
  align-items: center;
  justify-content: space-between;
  width: 151px;
  margin: -4px 17px 0 0;
`;

const Tabs = styled.div`
  display: flex;
  height: 30px;
  background: #217346;
  color: #fff;
`;
const Tab = styled.div`
  display: flex;
  align-items: center;
  justify-content: center;
  width: ${(p) => p.$w}px;
  margin-left: ${(p) => (p.$active ? 1 : 0)}px;
  padding-bottom: 2px;
  background: ${(p) => (p.$active ? "#f3f3f3" : "transparent")};
  color: ${(p) => (p.$active ? "#217346" : "#fff")};
`;
const TellMe = styled.div`
  display: flex;
  flex: 1;
  align-items: center;
  gap: 13px;
  padding: 0 0 2px 18px;
`;
const Share = styled.div`
  display: flex;
  align-items: center;
  gap: 4px;
  width: 72px;
  height: 24px;
  margin: 3px 12px 0 0;
  padding-left: 4px;
  border: 1px solid #fff;
  font-weight: 600;

  > svg:last-child {
    margin-left: 1px;
  }
`;

const RibbonBar = styled.div`
  position: relative;
  display: flex;
  height: 93px;
  border-bottom: 1px solid #d2d0ce;
  background: #f3f3f3;
`;
const Group = styled.div`
  position: relative;
  display: flex;
  flex-direction: column;
  width: ${(p) => p.$w}px;
  height: 84px;
  margin-top: 4px;
  border-right: 1px solid #8e8d8c;
`;
const Tools = styled.div`
  display: flex;
  flex: none;
  height: 72px;
  padding-left: ${(p) => p.$pad}px;
`;
const GroupName = styled.div`
  display: flex;
  justify-content: center;
  margin-right: ${(p) => p.$right || 0}px;
  line-height: 16px;
`;
const Launcher = styled.div`
  position: absolute;
  right: 3px;
  bottom: 0;
`;
const BigButton = styled.div`
  display: flex;
  flex-direction: column;
  align-items: center;
  width: ${(p) => p.$w}px;
`;
const BigArt = styled.div`
  height: 33px;
  padding-top: 4px;
  margin-bottom: 4px;
`;
const BigLine = styled.div`
  display: flex;
  align-items: center;
  height: 16px;
  line-height: 16px;
`;
const BigArrow = styled(BigLine)`
  height: 15px;
`;
const SmallColumn = styled.div`
  margin: -1px 0 0 ${(p) => p.$ml}px;
`;
const SmallButton = styled.div`
  display: flex;
  align-items: center;
  height: 23px;
  line-height: 21px;

  > span {
    margin-top: 2px;
  }
`;
const SmallArt = styled.div`
  display: flex;
  justify-content: center;
  width: 16px;
  margin-right: 3px;
`;
const SmallArrow = styled.div`
  margin-left: ${(p) => p.$gap}px;
`;
const GlyphA = styled.span`
  color: ${BLUE};
  font: italic 700 16px "Liberation Serif", serif;
  -webkit-text-stroke: 0.6px ${BLUE};
`;
const Greek = styled.span`
  color: ${BLUE};
  font: 400 17px/21px "DejaVu Serif", serif;
  -webkit-text-stroke: 0.4px ${BLUE};
`;
const ChartGrid = styled.div`
  display: grid;
  grid-template-columns: repeat(3, 36px);
  grid-auto-rows: 23px;
  margin: -1px 0 0 6px;
`;
const ChartButton = styled.div`
  display: flex;
  align-items: center;
  gap: 4px;
`;
const Collapse = styled.div`
  position: absolute;
  right: 8px;
  bottom: 3px;
`;

const License = styled.div`
  display: flex;
  align-items: center;
  height: 30px;
  padding-left: 9px;
  border: solid #b8921d;
  border-width: 1px 0;
  background: #fdf5b5;
  color: #444;
`;
const LicenseTitle = styled.div`
  margin: 0 10px 0 9px;
  color: #333;
`;
const LicenseButton = styled.div`
  display: flex;
  align-items: center;
  justify-content: center;
  width: ${(p) => p.$w}px;
  height: 22px;
  margin-left: ${(p) => p.$ml}px;
  padding-right: 2px;
  border: 1px solid #ababab;
  background: #fdfdfd;
`;
const LicenseClose = styled.div`
  margin: 0 12px 0 auto;
`;

const FormulaRow = styled.div`
  display: flex;
  height: 46px;
  padding: 10px 5px 10px;
  background: #e6e6e6;
`;
const NameBox = styled.div`
  display: flex;
  align-items: center;
  justify-content: space-between;
  width: 102px;
  padding: 0 6px;
  border: 1px solid #c6c6c6;
  background: #fdfdfd;
  color: #444;
`;
const Dots = styled.div`
  display: flex;
  align-items: center;
  justify-content: center;
  width: 30px;
`;
const FxBox = styled.div`
  display: flex;
  align-items: center;
  gap: 23px;
  width: 110px;
  padding-left: 12px;
  border: 1px solid #c6c6c6;
  background: #fdfdfd;
`;
const Fx = styled.span`
  margin-top: -2px;
  color: #555;
  font: italic 700 15px/15px "Liberation Serif", serif;

  > sub {
    font-size: 11px;
    vertical-align: -1px;
  }
`;
const FormulaInput = styled.div`
  display: flex;
  flex: 1;
  align-items: center;
  justify-content: flex-end;
  margin-left: 3px;
  padding-right: 4px;
  border: 1px solid #c6c6c6;
  background: #fdfdfd;
`;

const Work = styled.div`
  display: flex;
  height: 446px;
`;
const SheetGrid = styled.div`
  position: relative;
  display: grid;
  grid-template-columns: 23px 116px 116px 51px 116px 116px 51px 116px 116px 69px 116px 123px 51px 51px 51px 51px 11px;
  grid-template-rows: 16px 53px 32px;
  grid-auto-rows: 16px;
  width: 1345px;
  height: 446px;
  overflow: hidden;
  border-right: 1px solid #9b9b9b;
  border-bottom: 1px solid #9b9b9b;
  background: #fff;
`;
const Corner = styled.div`
  display: flex;
  align-items: flex-end;
  justify-content: flex-end;
  padding: 0 3px 3px 0;
  border-right: 1px solid #b5b5b5;
  border-bottom: 1px solid #9b9b9b;
  background: #e6e6e6;
`;
const ColHead = styled.div`
  border-right: ${(p) => (p.$last ? 0 : 1)}px solid #b5b5b5;
  border-bottom: ${(p) => (p.$active ? "2px solid #217346" : "1px solid #9b9b9b")};
  background: ${(p) => (p.$active ? "#d2d2d2" : "#e6e6e6")};
  color: ${(p) => (p.$active ? "#217346" : "#262626")};
  font-size: 11px;
  line-height: 14px;
  text-align: center;
`;
const RowHead = styled.div`
  grid-column: 1;
  grid-row: ${(p) => p.$row + 1};
  display: flex;
  align-items: flex-end;
  justify-content: center;
  border-right: ${(p) => (p.$active ? "2px solid #217346" : "1px solid #9b9b9b")};
  border-bottom: 1px solid #c3c3c3;
  background: ${(p) => (p.$active ? "#d2d2d2" : "#e6e6e6")};
  color: ${(p) => (p.$active ? "#217346" : "#262626")};
  font-size: 11.5px;
  line-height: 14px;
`;
const Cell = styled.div`
  grid-column: ${(p) => p.$col};
  grid-row: ${(p) => p.$row + 1};
  border-right: ${(p) => (p.$col === 17 ? 0 : 1)}px solid ${(p) => (p.$darkRight ? "#000" : "#d4d4d4")};
  border-bottom: 1px solid ${(p) => (p.$darkBottom ? "#000" : "#d4d4d4")};
`;
const ItemCell = styled.div`
  grid-column: ${(p) => p.$col};
  grid-row: ${(p) => p.$row + 1};
  display: flex;
  align-items: center;
  justify-content: center;
  border-right: 1px solid #000;
  border-bottom: 1px solid #000;
  background: ${(p) => (p.$low ? "#ffc7ce" : "#fff")};
  color: ${(p) => (p.$low ? "#9c2a10" : "#000")};
  font-size: 11.5px;
  line-height: 15px;
`;
const HeadCell = styled(ItemCell)`
  background: #375623;
  color: #fff;
`;
const KpiTitle = styled.div`
  grid-column: ${(p) => p.$col} / span 2;
  grid-row: 2;
  display: flex;
  align-items: center;
  justify-content: center;
  padding: 0 0 4px 1px;
  border-right: 1px solid #000;
  border-bottom: 1px solid #000;
  background: #2f5496;
  color: #fff;
  font-size: 17.5px;
  -webkit-text-stroke: 0.35px #fff;
`;
const KpiValue = styled(KpiTitle)`
  grid-row: 3;
  padding: 0 0 0 1px;
  background: #fff;
  color: #000;
  font-size: 11.5px;
  font-weight: 700;
  -webkit-text-stroke: 0;
`;
const Selection = styled.div`
  position: absolute;
  left: 1178px;
  top: 67px;
  width: 54px;
  height: 35px;
  border: 2px solid #217346;

  &::after {
    content: "";
    position: absolute;
    right: -3px;
    bottom: -3px;
    width: 6px;
    height: 6px;
    border: solid #fff;
    border-width: 1px 0 0 1px;
    background: #217346;
  }
`;

const ChartCard = styled.div`
  position: absolute;
  left: 910px;
  top: 125px;
  width: 385px;
  height: 231px;
  border: 1px solid #d4d4d4;
  background: #fff;
  color: #595959;

  > svg {
    display: block;
  }
`;
const ChartTitle = styled.div`
  position: absolute;
  top: 6px;
  left: 148px;
  font-size: 13.5px;
`;
const Legend = styled.div`
  position: absolute;
  bottom: 9px;
  left: 102px;
  display: flex;
  align-items: center;
  font-size: 9.5px;
`;
const LegendItem = styled.div`
  display: flex;
  align-items: center;
  gap: 3px;
  margin-right: ${(p) => p.$gap}px;
`;
const Swatch = styled.i`
  width: 3px;
  height: 4px;
  margin-top: 1px;
  background: ${(p) => p.$color};
`;

const VScroll = styled.div`
  display: flex;
  flex-direction: column;
  width: 15px;
  margin: 2px 0 0 3px;
`;
const ScrollButton = styled.div`
  display: flex;
  flex: none;
  align-items: center;
  justify-content: center;
  width: 15px;
  height: 15px;
  border: 1px solid #8f8f8f;
  background: #fff;
`;
const VThumb = styled.div`
  height: 396px;
  border: 1px solid #8f8f8f;
  background: #fff;
`;
const VRest = styled.div`
  flex: 1;
  background: #f0f0f0;
`;

const SheetBar = styled.div`
  display: flex;
  height: 27px;
  background: #e6e6e6;
  font-size: 12.5px;
`;
const TabArrows = styled.div`
  display: flex;
  align-items: center;
  gap: 25px;
  width: 101px;
  height: 20px;
  margin-top: 3px;
  padding-left: 27px;
  border-right: 1px solid #a0a0a0;
`;
const SheetTab = styled.div`
  display: flex;
  align-items: center;
  justify-content: center;
  width: ${(p) => p.$w}px;
  height: 24px;
  padding: ${(p) => (p.$active ? "2px 0 0" : "1px 2px 0 0")};
  border: solid #9b9b9b;
  border-width: ${(p) => (p.$active ? "0 1px" : 0)};
  border-bottom: ${(p) => (p.$active ? "2px solid #217346" : 0)};
  background: ${(p) => (p.$active ? "#fff" : "transparent")};
  color: ${(p) => (p.$active ? "#217346" : "#444")};
  font-weight: ${(p) => (p.$active ? 700 : 400)};
`;
const AddSheet = styled.div`
  margin: 5px 0 0 33px;
`;
const HScroll = styled.div`
  display: flex;
  align-items: center;
  gap: 15px;
  height: 15px;
  margin: 6px 21px 0 auto;
`;
const HTrack = styled.div`
  display: flex;
  width: 509px;
  background: #f0f0f0;
`;
const HThumb = styled.div`
  width: 451px;
  height: 15px;
  margin-left: -1px;
  border: 1px solid #8f8f8f;
  background: #fff;
`;
const HRest = styled.div`
  flex: 1;
`;

const Status = styled.div`
  display: flex;
  align-items: center;
  height: 22px;
  padding-left: 12px;
  border-top: 1px solid #c6c6c6;
  background: #f3f3f3;
  color: #333;
  font-size: 11px;
  line-height: 18px;

  span {
    margin-top: -1px;
  }
`;
const Accessibility = styled.div`
  display: flex;
  align-items: center;
  gap: 2px;
  margin-left: 18px;
  font-weight: 700;
`;
const Views = styled.div`
  display: flex;
  height: 21px;
  margin-left: auto;
`;
const View = styled.div`
  display: flex;
  align-items: center;
  justify-content: center;
  width: 40px;
  padding-right: 1px;
  background: ${(p) => (p.$active ? "#c8c8c8" : "transparent")};
`;
const Zoom = styled.div`
  display: flex;
  align-items: center;
  gap: 13px;
  margin: -1px 14px 0 6px;
`;

const Task = styled.div`
  display: flex;
  height: 40px;
  background: linear-gradient(90deg, #2a1e1d 0, #2a1e1d 340px, #331e18 400px, #331e18 460px, #251f1e 520px, #231f1e 1000px, #1c1c1c 1300px);
  color: #fff;
`;
const Start = styled.div`
  display: flex;
  align-items: center;
  justify-content: center;
  width: 48px;
  background: #1b1b1b;
`;
const Search = styled.div`
  display: flex;
  align-items: center;
  width: 288px;
  padding-left: 11px;
  border: 1px solid #cfcfcf;
  background: #f2f2f2;
  color: #2b2b2b;
`;
const SearchText = styled.div`
  margin: 0 48px 0 11px;
  font-size: 14.5px;
`;
const TaskView = styled.div`
  display: flex;
  align-items: center;
  justify-content: center;
  width: 48px;
`;
const Apps = styled.div`
  display: flex;
  gap: 1px;
  margin-left: 3px;
`;
const AppSlot = styled.div`
  position: relative;
  display: flex;
  align-items: center;
  justify-content: center;
  width: 48px;
  background: ${(p) => (p.$active ? "#545150" : "transparent")};

  &::after {
    content: "";
    position: absolute;
    left: ${(p) => (p.$active ? 0 : 4)}px;
    right: ${(p) => (p.$active ? 0 : 4)}px;
    bottom: 0;
    height: ${(p) => (p.$running ? 2 : 0)}px;
    background: #76b9ed;
  }
`;
const Unread = styled.div`
  position: absolute;
  right: 10px;
  bottom: 6px;
  height: 11px;
  padding: 0 1px;
  border-radius: 2px;
  background: #8b8b8b;
  font-size: 8px;
  font-weight: 700;
  line-height: 11px;
`;
const Tray = styled.div`
  display: flex;
  align-items: center;
  margin-left: auto;
`;
const Temp = styled.div`
  margin-left: 8px;
  font-size: 14px;
`;
const Weather = styled.div`
  margin-left: 9px;
  font-size: 14px;
`;
const TrayIcons = styled.div`
  display: flex;
  align-items: center;
  justify-content: space-between;
  width: 111px;
  margin-left: 25px;
`;
const Clock = styled.div`
  display: flex;
  flex-direction: column;
  align-items: center;
  width: 70px;
  margin-right: 9px;
  line-height: 18px;
`;
const ShowDesktop = styled.div`
  width: 4px;
  height: 40px;
  margin-left: 11px;
  border-left: 1px solid #6a6a6a;
`;

const Watermark = styled.div`
  position: absolute;
  left: 601px;
  top: 669px;
  width: 165px;
  color: rgba(178, 182, 180, 0.42);
  pointer-events: none;
`;
const WatermarkArabic = styled.div`
  height: 54px;
  margin-left: -2px;
  font-size: 53px;
  font-weight: 700;
  line-height: 56px;
`;
const WatermarkLatin = styled.div`
  font: 700 26px/30px "Liberation Sans", sans-serif;
`;
